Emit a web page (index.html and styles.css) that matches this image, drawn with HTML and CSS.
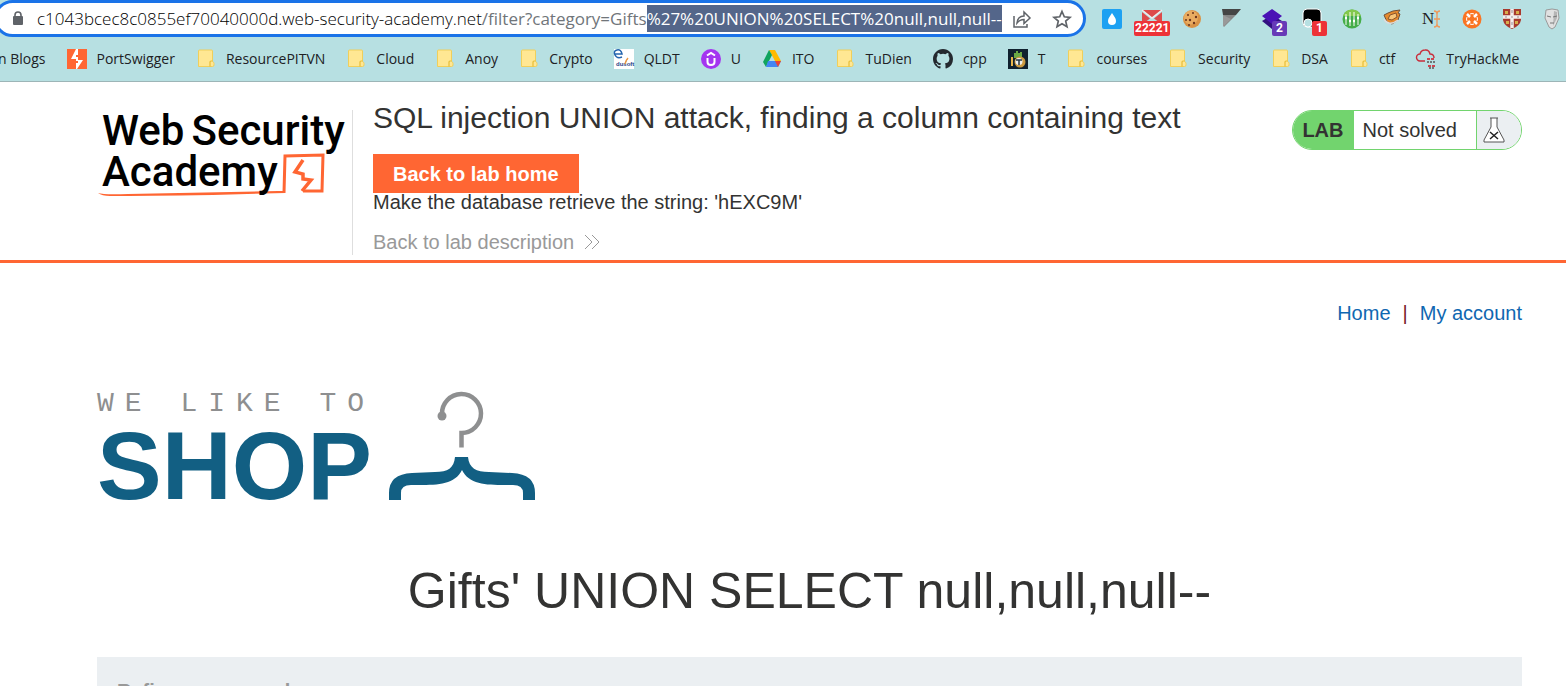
FILE: index.html
```html
<!DOCTYPE html>
<html lang="en">
<head>
<meta charset="utf-8">
<title>SQL injection UNION attack, finding a column containing text</title>
<link rel="stylesheet" href="styles.css">
</head>
<body>
<svg class="defs" aria-hidden="true">
  <symbol id="folder" viewBox="0 0 20 20"><path d="M3.500 1h12q1 0 1 1v10.500q1.500 .5 1.500 2V16q0 1.500-1.500 1.500h-14V2q0-1 1-1z" fill="#ffe793" stroke="#f0cf5a"/><path d="M14 17.500v-4.500q0-1 1-1h1.500" fill="none" stroke="#e8bd38" stroke-width="1.200"/></symbol>
</svg>
<div class="browser">
  <div class="toolbar">
    <div class="address">
      <svg class="lock" viewBox="0 0 12 15"><rect x="1" y="5" width="10" height="9" rx="1" fill="#5f6368"/><path d="M3 6V4a3 3 0 0 1 6 0v2" fill="none" stroke="#5f6368" stroke-width="1.600"/></svg>
      <div class="url" role="textbox" aria-label="Address" contenteditable="true" spellcheck="false"><span class="domain">c1043bcec8c0855ef70040000d.web-security-academy.net</span><span class="path">/filter?category=Gifts</span><span class="selected">%27%20UNION%20SELECT%20null,null,null--</span></div>
      <button class="tool" aria-label="Share"><svg viewBox="0 0 20 20" fill="none" stroke="#5f6368" stroke-width="1.500"><path d="M2 7v11h13v-3M5 14C5.500 9.500 8 7 12 7V3l6 6-6 5.500v-4C9 10.500 7 11.500 5 14z"/></svg></button>
      <button class="tool" aria-label="Bookmark this page"><svg viewBox="0 0 20 20" fill="none" stroke="#5f6368" stroke-width="1.700"><path d="M10 2.500l2.300 5.300 5.700.5-4.300 3.800 1.300 5.600-5-3-5 3 1.300-5.600L2 8.300l5.700-.5z"/></svg></button>
    </div>
    <div class="extensions">
      <button class="ext" aria-label="Water drop"><svg viewBox="0 0 20 20"><rect width="20" height="20" rx="2" fill="#1da1f2"/><path d="M10 4c2 3.500 4 5 4 8a4 4 0 0 1-8 0c0-3 2-4.500 4-8z" fill="#fff"/></svg></button>
      <button class="ext" aria-label="Mail"><svg viewBox="0 0 20 20"><path d="M0 1h20L10 8.500zM0 3l8 6.500-8 6zM20 3l-8 6.500 8 6z" fill="#dd4b4b"/><path d="M0 1l10 8 10-8" fill="none" stroke="#eee" stroke-width="1.500"/></svg><span class="badge badge-wide">22221</span></button>
      <button class="ext" aria-label="Cookies"><svg viewBox="0 0 20 20"><circle cx="10" cy="10" r="9" fill="#d99245"/><circle cx="9" cy="8.500" r="7" fill="#e9ac61"/><g fill="#6b351d"><circle cx="6" cy="6" r="1"/><circle cx="11" cy="4" r="1"/><circle cx="14" cy="8" r="1.200"/><circle cx="8" cy="11" r="1.200"/><circle cx="4" cy="11" r="1"/><circle cx="12" cy="14" r="1.200"/><circle cx="7" cy="16" r="1"/></g></svg></button>
      <button class="ext" aria-label="Flag"><svg viewBox="0 0 20 20"><path d="M0 0h19l-5 6H1z" fill="#454545"/><path d="M1 6h13L2 18z" fill="#858585"/><path d="M1 6l8 4-8 8z" fill="#999"/></svg></button>
      <button class="ext" aria-label="Layers"><svg viewBox="0 0 20 20"><path d="M10 6l10 6-10 8-10-8z" fill="#321080"/><path d="M10 0l10 7-10 8L0 7z" fill="#4a12b5"/></svg><span class="badge badge-purple">2</span></button>
      <button class="ext" aria-label="Tampermonkey"><svg viewBox="0 0 20 20"><rect x="1" y="0" width="18" height="18" rx="4" stroke="#fff"/><circle cx="6" cy="14" r="4" fill="#b7e0e2" stroke="#fff"/></svg><span class="badge">1</span></button>
      <button class="ext" aria-label="Filters"><svg viewBox="0 0 20 20"><circle cx="10" cy="10" r="9.500" fill="#45ad49"/><path d="M1 7a9.500 9.500 0 0 1 18 0z" fill="#83c84c"/><path d="M4 5v11M8 3v14M12 3v14M16 5v11" stroke="#fff" stroke-width="1"/><path d="M3 9h2M7 12h2M11 12h2M15 9h2" stroke="#fff" stroke-width="2.500"/></svg></button>
      <button class="ext" aria-label="Proxy"><svg viewBox="0 0 20 20"><path d="M2 6l4-2 5-2 7-1-2 3 2 1-2 6-6 4-5-2z" fill="#e58a2d" stroke="#705038"/><path d="M8 6l6-2 1 4-5 3-4-1z" fill="#f8c577" stroke="#8a552c"/><path d="M2 10q5 8 14 1" fill="none" stroke="#ddd" stroke-width="1.500"/></svg></button>
      <button class="ext" aria-label="Notes"><svg viewBox="0 0 20 20"><text x="0" y="15" class="notes-letter">N</text><path d="M12 2q3 0 3 3v10q0 3-3 3M18 2q-3 0-3 3v10q0 3 3 3M12 10h6" fill="none" stroke="#ee985a" stroke-width="1.300"/></svg></button>
      <button class="ext" aria-label="Network"><svg viewBox="0 0 20 20"><circle cx="10" cy="10" r="9.500" fill="#fa7422"/><path d="M8 5q2-1 4 0M15 8q1 2 0 4M12 15q-2 1-4 0M5 12q-1-2 0-4" fill="none" stroke="#fff" stroke-width="1"/><path d="M5 5l3 3M15 5l-3 3M5 15l3-3M15 15l-3-3" stroke="#fff" stroke-width="2.500"/></svg></button>
      <button class="ext" aria-label="Shield"><svg viewBox="0 0 20 20"><path d="M1 0h18v11q-1 6-9 9-8-3-9-9z" fill="#a83a2e"/><path d="M10 0v19M1 8h18" stroke="#f4eeee" stroke-width="3.500"/><path d="M10 1v3M10 7v2M10 13v3M3 8h2M15 8h2" stroke="#9b8d94"/><g fill="#d8ad4b"><path d="M3 2h3v3H3zM14 2h3v3h-3zM4 12h3v3H4zM13 12h3v3h-3z"/></g></svg></button>
      <button class="ext" aria-label="Mask"><svg viewBox="0 0 20 20"><path d="M4 1q6-2 12 0l1 8-4 9-3 2-3-2-4-9z" fill="#e1e1e1" stroke="#9a9a9a"/><path d="M12 2l3 1v6l-4 8z" fill="#b5b5b5"/><path d="M5 7l4 1M15 7l-4 1M8 14h4" fill="none" stroke="#777"/></svg></button>
    </div>
  </div>
  <nav class="bookmarks" aria-label="Bookmarks">
    <a href="#"><span class="cut">n Blogs</span></a>
    <a href="#"><svg viewBox="0 0 20 20"><path fill="#ff6633" d="M0 0h20v20H0z"/><path d="M9 0h2v6H9v4H4zM9 8h2v3h5l-6 9H9v-6h2v-2H9z" fill="#fff"/></svg>PortSwigger</a>
    <a href="#"><svg><use href="#folder"/></svg>ResourcePITVN</a>
    <a href="#"><svg><use href="#folder"/></svg>Cloud</a>
    <a href="#"><svg><use href="#folder"/></svg>Anoy</a>
    <a href="#"><svg><use href="#folder"/></svg>Crypto</a>
    <a href="#"><svg viewBox="0 0 20 20"><path fill="#fff" d="M0 0h20v20H0z"/><path d="M1 5h7Q7 0 3 1T1 6q2 4 7 2" fill="none" stroke="#2465ae" stroke-width="1.500"/><text x="2" y="17" class="edu">dusoft</text><path d="M11 15q1-4 3-6" stroke="#ee9841" stroke-width="1.500"/></svg>QLDT</a>
    <a href="#"><svg viewBox="0 0 20 20"><circle cx="10" cy="10" r="10" fill="#a435f0"/><path d="M6.500 9v4q0 3 3.500 3t3.500-3V9M6 6.500l4-2.500L14 6.500" fill="none" stroke="#fff" stroke-width="2"/></svg>U</a>
    <a href="#"><svg viewBox="0 0 20 20"><path d="M7 1h6l6 11h-6z" fill="#ffba00"/><path d="M7 1l3 5-6 12-3-5z" fill="#11a45d"/><path d="M6 12h13l-3 6H4z" fill="#4285f4"/><path d="M13 12h6l-3 6z" fill="#ea4335"/></svg>ITO</a>
    <a href="#"><svg><use href="#folder"/></svg>TuDien</a>
    <a href="#"><svg viewBox="0 0 16 16"><path fill="#24292f" d="M8 0C3.580 0 0 3.580 0 8c0 3.540 2.290 6.530 5.470 7.590.4.070.55-.17.55-.38 0-.19-.01-.82-.01-1.490-2.010.37-2.530-.49-2.690-.94-.09-.23-.48-.94-.82-1.130-.28-.15-.68-.52-.01-.53.63-.01 1.080.58 1.230.82.72 1.210 1.870.87 2.330.66.070-.52.28-.87.51-1.070-1.780-.2-3.640-.89-3.640-3.950 0-.87.31-1.590.82-2.150-.08-.2-.36-1.020.08-2.120 0 0 .67-.21 2.200.82a7.600 7.600 0 0 1 4 0c1.530-1.040 2.200-.82 2.200-.82.44 1.100.16 1.920.08 2.120.51.56.82 1.270.82 2.150 0 3.070-1.870 3.750-3.650 3.950.29.25.54.73.54 1.480 0 1.070-.01 1.930-.01 2.200 0 .21.15.46.55.38A8 8 0 0 0 16 8c0-4.420-3.580-8-8-8z"/></svg>cpp</a>
    <a href="#"><svg viewBox="0 0 20 20"><path fill="#10212e" d="M0 0h20v20H0z"/><path d="M6 9V4h2V2h2v2h2V3h2v6z" fill="#69a844"/><path d="M4 8v9" stroke="#e9b64a" stroke-width="2"/><circle cx="12" cy="13" r="5.500" fill="#cb9a3f"/><circle cx="11" cy="12.500" r="3.500" fill="#eee"/><path d="M8 11h6M11 11v5" stroke="#243743" stroke-width="1.500"/></svg>T</a>
    <a href="#"><svg><use href="#folder"/></svg>courses</a>
    <a href="#"><svg><use href="#folder"/></svg>Security</a>
    <a href="#"><svg><use href="#folder"/></svg>DSA</a>
    <a href="#"><svg><use href="#folder"/></svg>ctf</a>
    <a href="#"><svg viewBox="0 0 20 20"><path d="M9 12H4a3.500 3.500 0 0 1 0-7q1-4 5-4 4-.5 5 4 4 0 4 4" fill="none" stroke="#c92d3b" stroke-width="1.400"/><path d="M11 10h8M12 17h7" stroke="#ce4551" stroke-width="2" stroke-dasharray="3 1"/><path d="M11 13h8M13 19h5" stroke="#555" stroke-width="1.500" stroke-dasharray="2 1"/></svg>TryHackMe</a>
  </nav>
</div>

<header class="lab-header">
  <a class="academy" href="#" aria-label="Web Security Academy">
    <span class="academy-line"><span>Web</span><span>Security</span></span>
    <span class="academy-line">Academy</span>
    <svg class="academy-mark" viewBox="0 0 230 48" fill="#ff6633"><path d="M0 38q6 2 30 1l150-3 6 0 1 2-72 2q-70 1-103 1-8 0-12-3z"/><path d="M186 38L187 1l38-1-1 36-19 0" fill="none" stroke="#ff6633" stroke-width="3"/><path d="M205 5l-8 12 8 2v5l8 1-9 11" fill="none" stroke="#ff6633" stroke-width="3.500"/></svg>
  </a>
  <div class="lab-info">
    <h2>SQL injection UNION attack, finding a column containing text</h2>
    <a class="lab-home" href="#">Back to lab home</a>
    <p>Make the database retrieve the string: 'hEXC9M'</p>
    <a class="lab-description" href="#">Back to lab description <svg viewBox="0 0 16 16" fill="none" stroke="#999"><path d="M1 1l7 7-7 7M8 1l7 7-7 7"/></svg></a>
  </div>
  <div class="status">
    <strong>LAB</strong>
    <span class="state">Not solved</span>
    <span class="flask"><svg viewBox="0 0 22 28" fill="none" stroke="#555"><path d="M7 2h8M8 2v9L1 24v2h20v-2L14 11V2" fill="#fff"/><path d="M7 16l8 7M15 16l-8 7" stroke="#222" stroke-width="1.500"/></svg></span>
  </div>
</header>

<main class="page">
  <nav class="account"><a href="#">Home</a><span>|</span><a href="#">My account</a></nav>
  <div class="shop-logo">
    <div class="shop-words"><span class="tagline">WE LIKE TO</span><span class="shop">SHOP</span></div>
    <svg class="hanger" viewBox="0 0 148 110" fill="none"><path d="M54 23A19.500 19.500 0 1 1 73.500 42V56.500" stroke="#8e8f90" stroke-width="4.500"/><circle cx="54" cy="25" r="4.500" fill="#8e8f90"/><path d="M67 66h13c1 11 8 15 21 15l23 1q23 1 23 20v7h-12v-7q0-8-10-8c-24 0-43 1-51-15-8 16-27 15-51 15q-10 0-10 8v7H1v-7q0-19 23-20l23-1c13 0 19-4 20-15z" fill="#125f83"/></svg>
  </div>
  <h1>Gifts' UNION SELECT null,null,null--</h1>
  <section class="filters"><strong>Refine your search:</strong></section>
</main>
</body>
</html>
```

FILE: styles.css
```css
* { box-sizing: border-box; }
body { margin: 0; height: 100vh; overflow: hidden; background: #fff; color: #333332; font: 20px/24px "Liberation Sans", Arial, sans-serif; }
a { color: inherit; text-decoration: none; }
button { padding: 0; border: 0; background: none; }
svg { flex: none; overflow: visible; }
h1, h2, p { margin: 0; font-weight: normal; }
.defs { position: absolute; width: 0; height: 0; }

.browser { background: #b7e0e2; border-bottom: 1px solid #9db5b7; font-family: "Open Sans", "Noto Sans", sans-serif; color: #202124; }
.toolbar { display: flex; height: 37px; }
.address { flex: 1; min-width: 0; display: flex; align-items: center; margin-left: -6px; padding: 0 11px 0 15px; border: 3px solid #1a73e8; border-radius: 19px; background: #fff; }
.lock { width: 12px; height: 15px; margin-right: 13px; }
.url { flex: 1; min-width: 0; white-space: nowrap; font-size: 17px; line-height: 27px; outline: 0; }
.domain { font-weight: 300; color: #000; }
.path { color: #70757a; }
.selected { display: inline-block; background: #54668a; color: #fff; }
.tool { flex: none; width: 20px; height: 20px; margin-left: 20px; }
.tool:first-of-type { margin-left: 10px; }
.tool svg, .ext svg { display: block; width: 20px; height: 20px; }
.extensions { display: flex; flex: none; align-items: center; gap: 20px; margin-right: -6px; padding: 0 10px 0 16px; }
.ext { position: relative; width: 20px; height: 20px; }
.badge { position: absolute; left: 10px; top: 12px; min-width: 15px; padding: 0 3px; border-radius: 2px; background: #ed3237; color: #fff; font: bold 12px/15px Roboto, sans-serif; text-align: center; }
.badge-wide { left: -8px; padding: 0 1px; }
.badge-purple { background: #673ab7; }
.notes-letter { font: 17px "Liberation Serif", serif; fill: #222; }
.bookmarks { display: flex; align-items: center; gap: 21px; height: 44px; font-size: 14px; line-height: 20px; white-space: nowrap; }
.bookmarks a { display: flex; align-items: center; gap: 10px; }
.bookmarks svg { width: 20px; height: 20px; }
.cut { margin-left: -2px; }
.edu { font: bold 6px "Liberation Sans", sans-serif; fill: #263f87; }

.lab-header { display: flex; padding: 28px 44px 5px 97px; border-bottom: 3px solid #ff6633; }
.academy { position: relative; width: 256px; padding-left: 5px; border-right: 1px solid #dedede; color: #000; font: 500 42px/41px Roboto, sans-serif; }
.academy-line { display: flex; gap: 7px; }
.academy-mark { position: absolute; left: 1px; top: 45px; width: 230px; height: 48px; z-index: -1; }
.lab-info { flex: 1; display: flex; flex-direction: column; align-items: flex-start; padding-left: 20px; }
.lab-info h2 { font-size: 30px; line-height: 36px; margin: -10px 0 18px; }
.lab-home { padding: 8px 20px 7px; background: #ff6633; color: #fff; font-weight: bold; }
.lab-info p { line-height: 18px; }
.lab-description { display: flex; align-items: center; gap: 10px; margin: 19px 0 1px; color: #999; }
.lab-description svg { width: 16px; height: 16px; }
.status { display: flex; height: 40px; border: 1px solid #72d46e; border-radius: 20px; overflow: hidden; line-height: 38px; }
.status strong { padding: 0 10px 0 9px; background: #72d46e; }
.state { padding: 0 19px 0 9px; }
.flask { display: flex; align-items: center; width: 45px; padding-left: 6px; border-left: 1px solid #72d46e; background: #ebeff2; }
.flask svg { width: 22px; height: 28px; }

.page { padding: 38px 44px 0 97px; }
.account { display: flex; justify-content: flex-end; gap: 12px; color: #7a1a2a; }
.account a { color: #0f67b1; }
.shop-logo { display: flex; gap: 13px; margin-top: 66px; height: 110px; }
.shop-words { display: flex; flex-direction: column; color: #125f83; }
.tagline { font: 28px/26px "Liberation Mono", monospace; letter-spacing: 11px; color: #8e8f90; }
.shop { font-size: 97px; font-weight: bold; line-height: 98px; }
.hanger { width: 148px; height: 110px; }
.page h1 { margin: 60px 0 36px; font-size: 50px; line-height: 60px; text-align: center; }
.filters { padding: 22px 20px; background: #ebeff2; color: #999; }
```
